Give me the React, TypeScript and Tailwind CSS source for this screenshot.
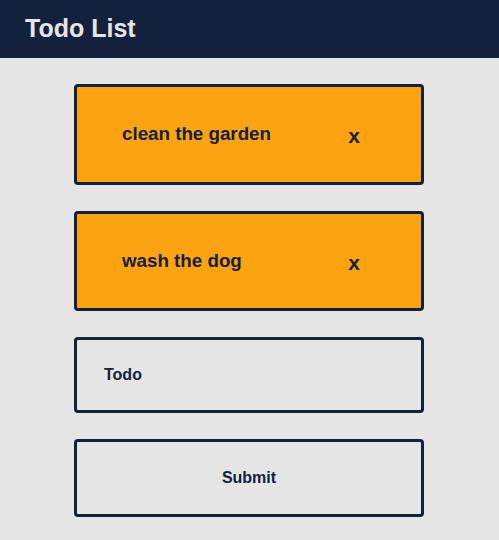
export default function App() {
  const todos = ["clean the garden", "wash the dog"]

  return (
    <div className="min-h-[540px] w-full bg-[#e5e5e5] font-['Liberation_Sans',Arial,sans-serif]">
      <header className="flex h-[58px] items-center bg-[#14213d] px-[25px]">
        <h1 className="text-[25px] font-bold text-[#e5e5e5]">Todo List</h1>
      </header>

      <main className="ml-[74px] flex w-[350px] flex-col gap-[26px] pt-[26px]">
        {todos.map((todo) => (
          <div
            key={todo}
            className="flex h-[100.5px] items-center justify-between rounded-[4px] border-[3px] border-[#14213d] bg-[#fca311] pl-[45px] pr-[61px] text-[#14213d]"
          >
            <span className="text-[18.75px] font-bold">{todo}</span>
            <button className="mt-[3px] text-[21px] font-bold leading-none">x</button>
          </div>
        ))}

        <input
          className="h-[76px] rounded-[4px] border-[3px] border-[#14213d] bg-transparent px-[27px] text-[16px] font-bold text-[#14213d] outline-none placeholder:text-[#14213d]"
          placeholder="Todo"
        />

        <button className="h-[78px] rounded-[4px] border-[3px] border-[#14213d] text-[16px] font-bold text-[#14213d]">
          Submit
        </button>
      </main>
    </div>
  )
}
